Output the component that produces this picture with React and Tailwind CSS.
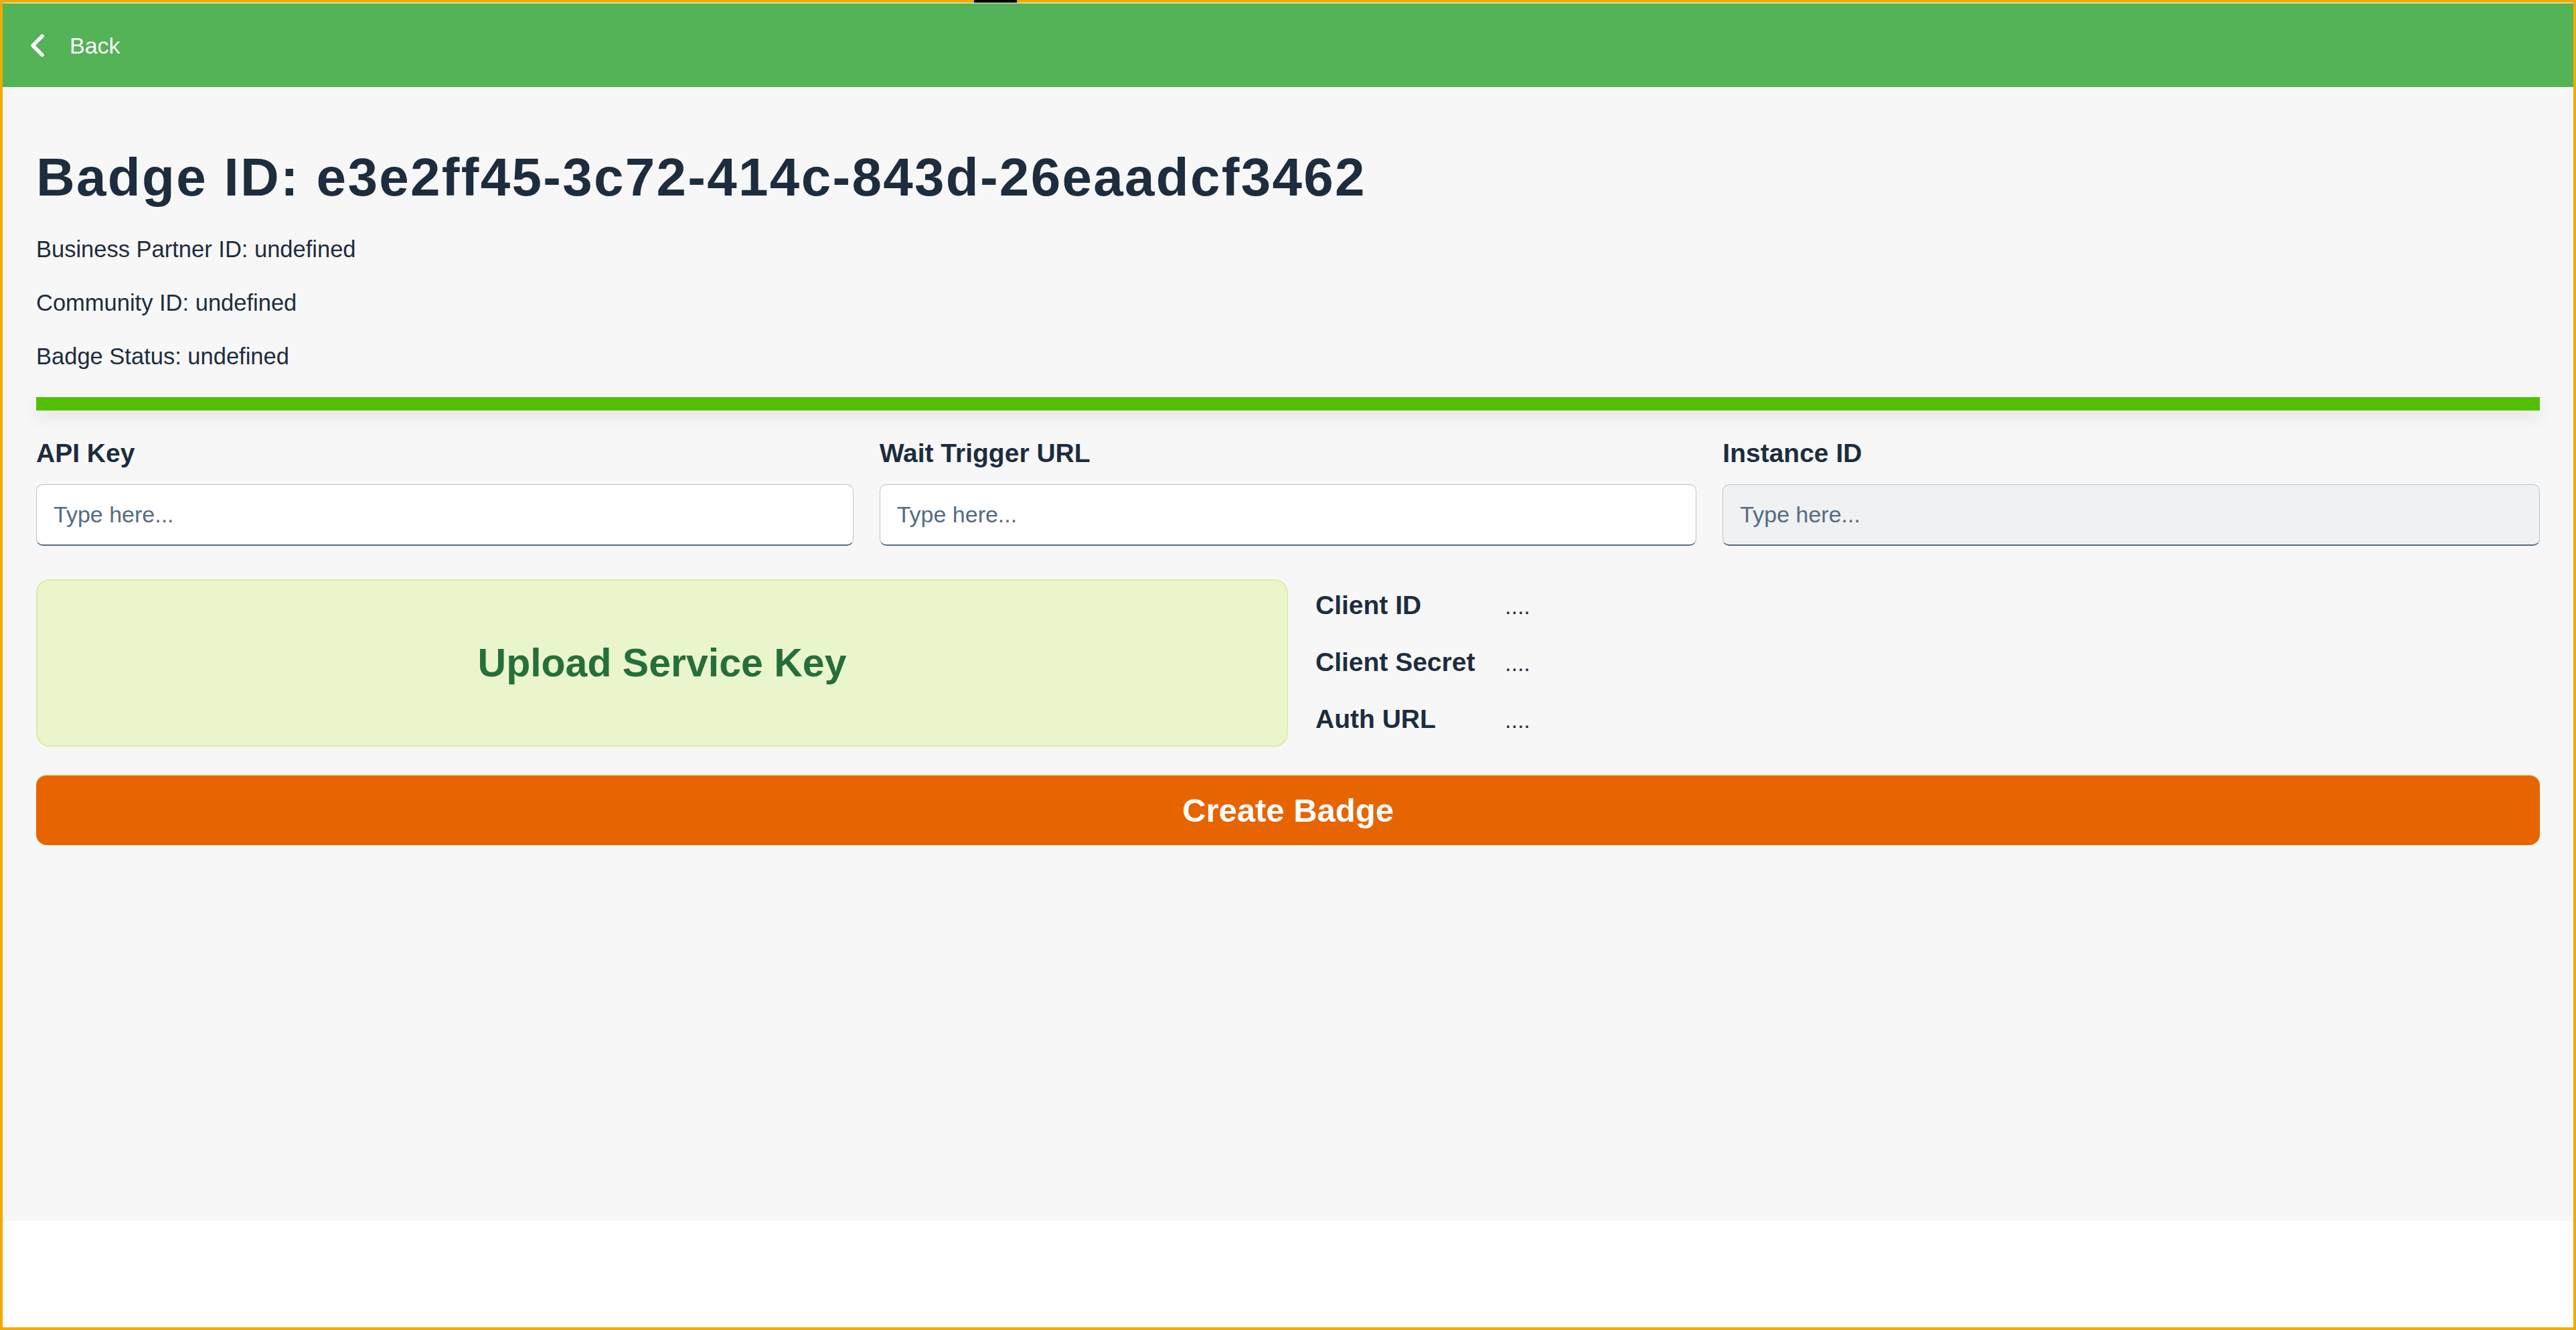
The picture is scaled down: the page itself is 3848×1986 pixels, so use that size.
import React from 'react';

const font = "font-['Liberation_Sans',Arial,sans-serif]";

const Field = ({ label, readOnly = false }) => (
  <div className="flex flex-col">
    <label className="text-[39px] leading-none font-bold text-[#1d2d3e] mt-[44px]">{label}</label>
    <input
      type="text"
      placeholder="Type here..."
      readOnly={readOnly}
      className={`mt-[27px] h-[92px] w-full rounded-[10px] border border-[#bcc3ca] border-b-2 border-b-[#556b82] px-[25px] text-[34px] text-[#1d2d3e] placeholder-[#556b82] outline-none ${
        readOnly ? 'bg-[#eff1f2]' : 'bg-white'
      }`}
    />
  </div>
);

const ClientRow = ({ label }) => (
  <>
    <div className="text-[39px] leading-[83px] font-bold text-[#1d2d3e]">{label}</div>
    <div className="text-[34px] leading-[83px] text-[#1d2d3e]">....</div>
  </>
);

export default function App() {
  return (
    <div className={`relative h-[1986px] w-full border-4 border-[#f0ab00] bg-white flex flex-col ${font}`}>
      {/* cursor strip in window frame */}
      <div className="absolute -top-[4px] left-[1451px] w-[64px] h-[4px] bg-black" />

      {/* Header */}
      <header className="h-[126px] border-t border-white bg-[#54b257] flex items-center pl-[39px]">
        <button type="button" className="flex items-center text-white">
          <svg width="26" height="36" viewBox="0 0 26 36" fill="none">
            <polyline points="20,4 6,18 20,32" stroke="white" strokeWidth="5.5" strokeLinecap="round" strokeLinejoin="round" />
          </svg>
          <span className="ml-[35px] text-[34px] leading-none">Back</span>
        </button>
      </header>

      {/* Main */}
      <main className="h-[1693px] bg-[#f7f7f7] px-[50px] pt-[95px]">
        <h1 className="text-[80px] leading-none font-bold tracking-[2.3px] text-[#1d2d3e]">
          Badge ID: e3e2ff45-3c72-414c-843d-26eaadcf3462
        </h1>
        <div className="mt-[27px] text-[34.5px] leading-[80px] text-[#1d2d3e]">
          <p>Business Partner ID: undefined</p>
          <p>Community ID: undefined</p>
          <p>Badge Status: undefined</p>
        </div>

        {/* Progress bar */}
        <div className="mt-[21px] h-[20px] w-full bg-[#52c000] shadow-[0_10px_22px_rgba(120,90,90,0.12)]" />

        {/* Inputs */}
        <div className="grid grid-cols-3 gap-x-[39px]">
          <Field label="API Key" />
          <Field label="Wait Trigger URL" />
          <Field label="Instance ID" readOnly />
        </div>

        {/* Service key */}
        <div className="mt-[50px] h-[250px] flex items-start">
          <div className="w-1/2 h-[250px] rounded-[20px] border-2 border-[#dbeda4] bg-[#ebf5cb] flex items-center justify-center">
            <span className="text-[59px] leading-none font-bold text-[#256f3a]">Upload Service Key</span>
          </div>
          <div className="-mt-[3px] pl-[41px] grid grid-cols-[283px_auto] items-baseline">
            <ClientRow label="Client ID" />
            <ClientRow label="Client Secret" />
            <ClientRow label="Auth URL" />
          </div>
        </div>

        {/* Create */}
        <button
          type="button"
          className="mt-[41px] h-[106px] w-full rounded-[16px] border-t-2 border-t-[#dcedb0] bg-[#e76500] text-white text-[49px] font-bold leading-none"
        >
          Create Badge
        </button>
      </main>
    </div>
  );
}
